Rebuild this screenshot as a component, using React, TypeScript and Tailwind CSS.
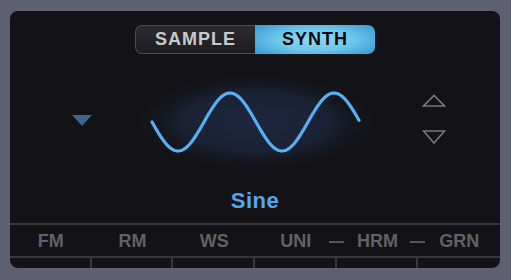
import React from "react";

const tabs = ["FM", "RM", "WS", "UNI", "HRM", "GRN"];

function sinePath() {
  const pts: string[] = [];
  // x from 12 to 219 within a 230 wide box, center y 42
  for (let x = 12; x <= 219; x += 1) {
    const y = 42 + 29 * Math.sin(((x - 12) / 104) * Math.PI * 2);
    pts.push(`${x === 12 ? "M" : "L"}${x} ${y.toFixed(2)}`);
  }
  return pts.join(" ");
}

export default function App() {
  return (
    <div
      className="w-[511px] h-[280px] bg-[#5e5f71] pt-[11px] pl-[10px]"
      style={{ fontFamily: '"Liberation Sans", Arial, sans-serif' }}
    >
      <div className="w-[490px] h-[257px] bg-[#131317] rounded-[8px] flex flex-col overflow-hidden">
        {/* SAMPLE / SYNTH toggle */}
        <div className="mt-[14px] mx-auto flex h-[29px] w-[240px]">
          <div className="w-[120px] flex items-center justify-center rounded-l-[7px] border border-r-0 border-[#4a4a50] bg-gradient-to-b from-[#2c2c30] to-[#1d1d21] text-[#c9c9cc] text-[18px] font-bold tracking-[1px]">
            SAMPLE
          </div>
          <div
            className="w-[120px] flex items-center justify-center rounded-r-[7px] text-[#0a0a0c] text-[18px] font-bold tracking-[1px]"
            style={{
              background:
                "radial-gradient(ellipse 60% 70% at 50% 50%, #8fdcf3 0%, #6cc6ec 55%, #3d9fd6 100%)",
            }}
          >
            SYNTH
          </div>
        </div>

        {/* wave row */}
        <div className="mt-[26px] grid grid-cols-[130px_230px_130px] h-[85px]">
          <div className="flex justify-center pt-[35px] pl-[14px]">
            <svg width="20" height="11" viewBox="0 0 20 11">
              <polygon points="0,0 20,0 10,11" fill="#3c6590" />
            </svg>
          </div>
          <div className="relative">
            <svg width="230" height="85" viewBox="0 0 230 85" className="overflow-visible">
              <defs>
                <radialGradient id="glow" cx="50%" cy="50%" r="50%">
                  <stop offset="0%" stopColor="#1e2740" />
                  <stop offset="60%" stopColor="#1a2133" />
                  <stop offset="100%" stopColor="#131317" stopOpacity="0" />
                </radialGradient>
              </defs>
              <ellipse cx="116" cy="42" rx="125" ry="50" fill="url(#glow)" />
              <path
                d={sinePath()}
                fill="none"
                stroke="#56b0f2"
                strokeWidth="3.2"
                strokeLinecap="round"
              />
            </svg>
          </div>
          <div className="flex flex-col items-center pt-[14px] pr-[2px] gap-[23px]">
            <svg width="24" height="13" viewBox="0 0 24 13">
              <polygon points="1.5,12 22.5,12 12,1.5" fill="none" stroke="#77777c" strokeWidth="1.6" />
            </svg>
            <svg width="24" height="15" viewBox="0 0 24 15">
              <polygon points="1.5,1 22.5,1 12,13" fill="none" stroke="#77777c" strokeWidth="1.6" />
            </svg>
          </div>
        </div>

        <div className="mt-[25px] h-[22px] text-center text-[22px] leading-[22px] font-bold tracking-[0.5px] text-[#4fa9f0]">
          Sine
        </div>

        {/* tab row */}
        <div className="mt-[11px] border-t-2 border-b-2 border-[#38383c] h-[35px] grid grid-cols-6">
          {tabs.map((t, i) => (
            <div key={t} className="relative flex items-center justify-center pt-[2px] text-[18px] font-bold text-[#616166]">
              {t}
              {(i === 4 || i === 5) && (
                <span className="absolute left-[-8px] top-[16px] w-[15px] h-[2px] bg-[#56565c]" />
              )}
            </div>
          ))}
        </div>
        <div className="grid grid-cols-6 flex-1">
          {tabs.map((t, i) => (
            <div key={t} className={i < 5 ? "border-r-2 border-[#38383c]" : ""} />
          ))}
        </div>
      </div>
    </div>
  );
}
